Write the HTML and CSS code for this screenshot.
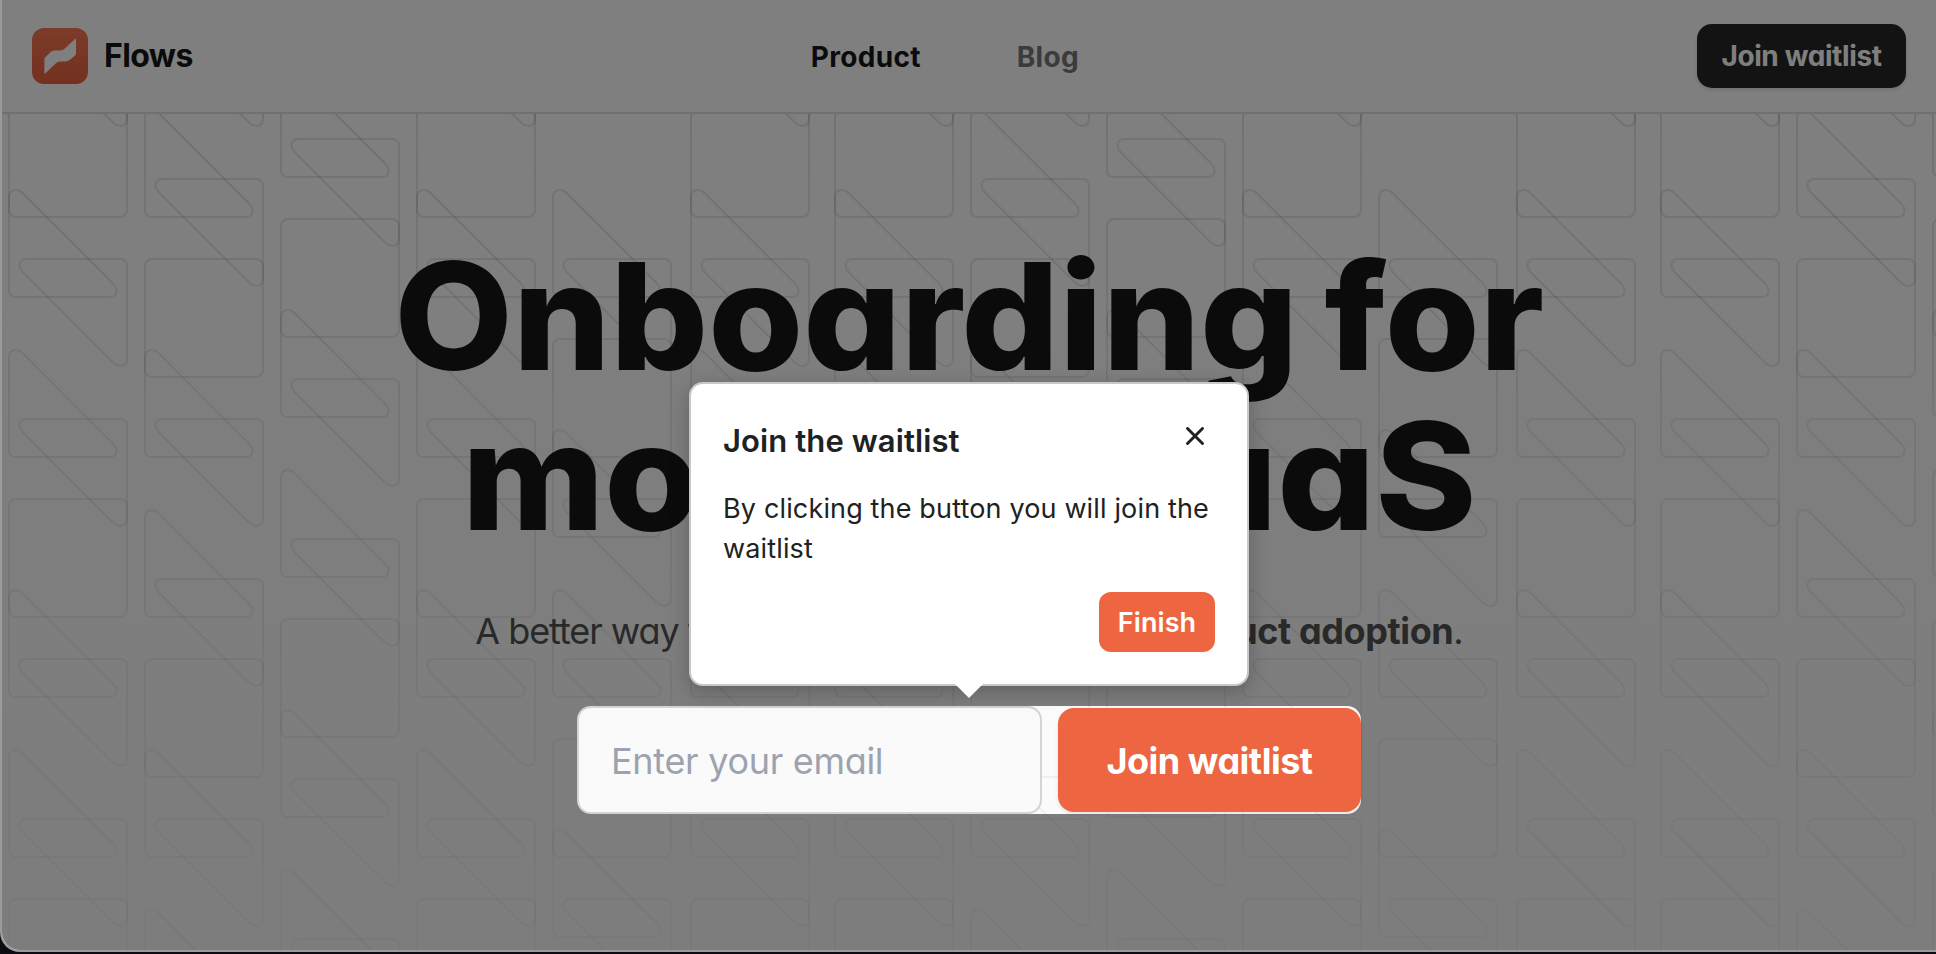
FILE: index.html
```html
<!DOCTYPE html>
<html lang="en">
<head>
<meta charset="utf-8">
<title>Flows</title>
<link rel="stylesheet" href="styles.css">
</head>
<body>
<div class="window">
  <header class="header">
    <a class="brand">
      <svg class="logo" viewBox="0 0 56 56">
        <defs><linearGradient id="lg" x1="0" y1="0" x2="0" y2="1"><stop offset="0" stop-color="#f87852"/><stop offset="1" stop-color="#ea6040"/></linearGradient></defs>
        <rect width="56" height="56" rx="12" fill="url(#lg)"/>
        <path d="M43.600 10.400Q44 10 44 11V25.600Q44 26.400 43.400 27L38.400 31.600Q36.400 33.400 33.600 33.400H28.400Q25.600 33.400 23.600 35.400L13.200 45.400Q12.400 46 12.400 45V30.800Q12.400 30 13 29.400L18 24.400Q20 22.600 22.800 22.600H28Q30.800 22.600 32.800 20.600Z" fill="#fff"/>
      </svg>
      <span class="brand-name">Flows</span>
    </a>
    <nav class="nav">
      <a class="nav-link active">Product</a>
      <a class="nav-link">Blog</a>
    </nav>
    <a class="btn-dark">Join waitlist</a>
  </header>
  <main class="hero">
    <svg class="pattern" width="1934" height="836" viewBox="2 114 1934 836" fill="none">
      <defs>
        <path id="wa" d="M0 98V98.500Q0 91 7 91Q10.500 91 13.500 94L104.500 185Q107.500 188 107.500 191.500Q107.500 198 100.500 198H7Q0 198 0 191Z"/>
        <path id="wb" d="M118 260V259.500Q118 267 111 267Q107.500 267 104.500 264L13.500 173Q10.500 170 10.500 166.500Q10.500 160 17.500 160H111Q118 160 118 167Z"/>
        <g id="pair"><use href="#wa"/><use href="#wb"/></g>
        <g id="unit">
          <rect x="0" y="0" width="118" height="118" rx="7"/>
          <use href="#pair"/>
          <use href="#pair" y="160"/>
        </g>
        <g id="col"><use href="#unit" y="-400"/><use href="#unit"/><use href="#unit" y="400"/><use href="#unit" y="800"/></g>
        <g id="short"><use href="#pair" y="-240"/><use href="#unit"/><use href="#unit" y="400"/></g>
        <g id="set">
          <use href="#col" x="0" y="99"/>
          <use href="#col" x="136" y="259"/>
          <use href="#col" x="272" y="219"/>
          <use href="#col" x="408" y="99"/>
          <use href="#short" x="544" y="339"/>
          <use href="#col" x="682" y="99"/>
        </g>
      </defs>
      <g class="lines">
        <use href="#set" x="9"/>
        <use href="#set" x="835"/>
        <use href="#set" x="1661"/>
      </g>
    </svg>
    <div class="hero-body">
      <h1 class="title"><span>Onboarding for</span><span>modern SaaS</span></h1>
      <p class="subtitle">A better way <span class="loose">to onboard users and drive <b>prod</b></span><b>uct adoption</b>.</p>
      <div class="form">
        <div class="field">Enter your email</div>
        <div class="btn-join">Join waitlist</div>
        <div class="spotlight"></div>
      </div>
    </div>
  </main>
  <section class="tip">
    <div class="tip-head">
      <h2 class="tip-title">Join the waitlist</h2>
      <svg class="close" viewBox="0 0 18 18"><path d="M1.500 1.500L16.500 16.500M16.500 1.500L1.500 16.500" stroke="#202222" stroke-width="2.900" stroke-linecap="round" fill="none"/></svg>
    </div>
    <p class="tip-text">By clicking the button you will join the<br>waitlist</p>
    <div class="tip-foot"><span class="btn-finish">Finish</span></div>
    <svg class="arrow" viewBox="0 0 28 14"><path d="M0 0H28L14 14Z" fill="#fff"/></svg>
  </section>
</div>
</body>
</html>
```
FILE: styles.css
```css
* { box-sizing: border-box; margin: 0; padding: 0; }
body { width: 1936px; height: 954px; overflow: hidden; background: #0d0b12; font-family: Inter, "Liberation Sans", sans-serif; }
.window { position: relative; width: 1960px; height: 952px; overflow: hidden; background: #fff; border: 2px solid #9b9b9b; border-top: 0; border-radius: 0 0 0 20px; font-feature-settings: "cv11", "ss03"; }
.header { display: flex; justify-content: space-between; align-items: center; width: 1934px; height: 114px; padding: 0 30px; border-bottom: 2px solid #e0e0e0; background: #fff; }
.brand { display: flex; align-items: center; gap: 16px; }
.logo { width: 56px; height: 56px; }
.brand-name { margin-top: -1px; font-size: 32px; font-weight: 700; letter-spacing: -.6px; color: #171717; }
.nav { display: flex; gap: 96px; padding-top: 2px; }
.nav-link { font-size: 28px; font-weight: 700; letter-spacing: .3px; color: #767676; }
.nav .active { color: #171717; }
.btn-dark { display: flex; align-items: center; justify-content: center; width: 209px; height: 64px; border-radius: 15px; background: #262626; color: #fff; font-size: 28px; font-weight: 700; letter-spacing: -.4px; box-shadow: 0 2px 4px rgba(0,0,0,.12); }
.hero { position: relative; width: 1934px; height: 836px; background: linear-gradient(#fff, #fafafa); }
.pattern { position: absolute; inset: 0; -webkit-mask-image: linear-gradient(#000, rgba(0,0,0,.25)); mask-image: linear-gradient(#000, rgba(0,0,0,.25)); }
.lines { stroke: rgba(0,0,0,.1); stroke-width: 2; }
.hero-body { position: relative; display: flex; flex-direction: column; align-items: center; padding-top: 122px; }
.title { display: flex; flex-direction: column; align-items: center; transform: scaleX(1.03); font-size: 149px; line-height: 160px; font-weight: 800; word-spacing: -7px; color: #171717; white-space: nowrap; }
.subtitle { margin-top: 47px; font-size: 36px; line-height: 56px; letter-spacing: -1.05px; color: #525252; white-space: nowrap; }
.subtitle b { letter-spacing: -.4px; }
.loose { letter-spacing: -.15px; }
.form { position: relative; display: flex; gap: 16px; margin-top: 47px; width: 784px; height: 108px; }
.field { width: 465px; height: 108px; padding-left: 32px; border: 2px solid #d4d4d4; border-radius: 14px; background: #fafafa; color: #9ca3af; font-size: 36px; line-height: 106px; letter-spacing: -.3px; }
.btn-join { display: flex; align-items: center; justify-content: center; width: 303px; height: 104px; margin-top: 2px; padding-top: 1px; border-radius: 16px; background: #ee6541; color: #fff; font-size: 36px; font-weight: 700; letter-spacing: -.5px; box-shadow: 0 2px 4px rgba(0,0,0,.1); }
.spotlight { position: absolute; inset: 0; border-radius: 14px; box-shadow: 0 0 0 3000px rgba(0,0,0,.5); }
.tip { position: absolute; left: 687px; top: 382px; width: 560px; height: 304px; padding: 34px 32px; border: 2px solid #c8c8c8; border-radius: 14px; background: #fff; color: #202222; font-feature-settings: normal; box-shadow: 0 6px 20px rgba(20,20,40,.26); }
.tip-head { display: flex; justify-content: space-between; }
.tip-title { font-size: 31px; line-height: 46px; font-weight: 600; letter-spacing: .1px; }
.close { width: 18px; height: 18px; margin: 9px 11px; }
.tip-text { margin-top: 25px; font-size: 27px; line-height: 40px; letter-spacing: .15px; white-space: nowrap; }
.tip-foot { display: flex; justify-content: flex-end; margin-top: 23px; }
.btn-finish { display: flex; align-items: center; justify-content: center; width: 116px; height: 60px; border-radius: 12px; background: #ee6541; color: #fff; font-size: 27px; font-weight: 600; letter-spacing: .1px; }
.arrow { position: absolute; left: 264px; bottom: -14px; width: 28px; height: 14px; }
```
